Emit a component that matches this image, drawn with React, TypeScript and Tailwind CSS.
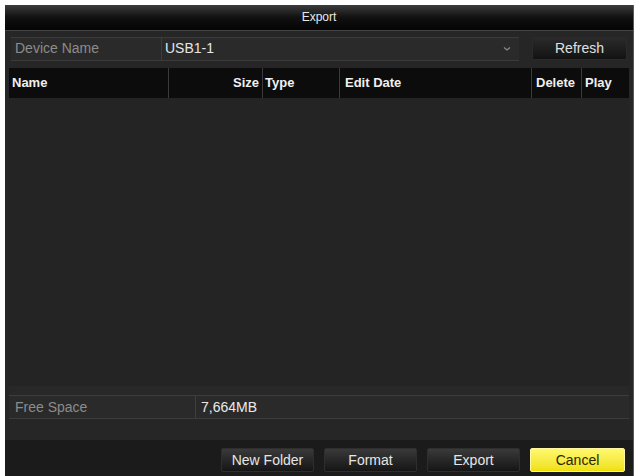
import React from "react";

const font = { fontFamily: '"Liberation Sans", Arial, sans-serif' };

function Btn({ label, yellow }: { label: string; yellow?: boolean }) {
  return (
    <div
      className={
        yellow
          ? "w-[95px] h-[24px] flex items-center justify-center rounded-[2px] bg-gradient-to-b from-[#fff86a] to-[#f0e000] border border-[#fff7a0] text-[#2a2600] text-[14px]"
          : "w-[93px] h-[24px] flex items-center justify-center rounded-[2px] bg-gradient-to-b from-[#3a3a3a] to-[#161616] border border-[#2e2e2e] text-[#e6e6e6] text-[14px]"
      }
    >
      {label}
    </div>
  );
}

export default function App() {
  return (
    <div className="w-[640px] h-[476px] bg-white pl-[5px] pt-[5px] pr-[6px]" style={font}>
      <div className="w-full h-full flex flex-col bg-[#262626] border-r border-[#5a5a5a]">
        {/* title */}
        <div className="h-[26px] flex items-center justify-center bg-gradient-to-b from-[#3c3c3c] via-[#111] to-[#050505] border-b border-[#444] text-[#e8e8e8] text-[12px]">
          Export
        </div>
        {/* device row */}
        <div className="flex items-center mt-[5px] px-[6px] h-[26px] gap-[13px]">
          <div className="flex-1 flex h-[24px] border-y border-[#3a3a3a] bg-[#2a2a2a]">
            <div className="w-[151px] flex items-center pl-[4px] text-[#8c8c8c] text-[14px] border-r border-[#3c3c3c]">
              Device Name
            </div>
            <div className="flex-1 flex items-center pl-[3px] pr-[8px] text-[#e6e6e6] text-[14px]">
              <span className="flex-1">USB1-1</span>
              <svg width="8" height="6" viewBox="0 0 8 6">
                <path d="M1 1.5 L4 4 L7 1.5" stroke="#8a8a8a" strokeWidth="1.2" fill="none" />
              </svg>
            </div>
          </div>
          <div className="w-[95px] h-[23px] flex items-center justify-center bg-gradient-to-b from-[#2a2a2a] to-[#131313] border border-[#2a2a2a] text-[#e0e0e0] text-[14px]">
            Refresh
          </div>
        </div>
        {/* header */}
        <div className="mt-[6px] mx-[4px] h-[30px] flex bg-[#0c0c0c] text-[#f0f0f0] text-[13px] font-bold">
          <div className="w-[160px] flex items-center pl-[3px] border-r border-[#3a3a3a]">Name</div>
          <div className="w-[94px] flex items-center justify-end pr-[3px] border-r border-[#3a3a3a]">Size</div>
          <div className="w-[77px] flex items-center pl-[2px] border-r border-[#3a3a3a]">Type</div>
          <div className="w-[192px] flex items-center pl-[5px] border-r border-[#3a3a3a]">Edit Date</div>
          <div className="w-[50px] flex items-center pl-[4px] border-r border-[#3a3a3a]">Delete</div>
          <div className="flex-1 flex items-center pl-[3px]">Play</div>
        </div>
        {/* body */}
        <div className="mx-[4px] h-[289px] bg-[#242424]" />
        {/* free space */}
        <div className="mx-[4px] flex-1 flex flex-col bg-[#282828] pt-[9px]">
          <div className="h-[24px] flex border-y border-[#3c3c3c] bg-[#2a2a2a] text-[14px]">
            <div className="w-[187px] flex items-center pl-[6px] text-[#8c8c8c] border-r border-[#3e3e3e]">Free Space</div>
            <div className="flex-1 flex items-center pl-[5px] text-[#eaeaea]">7,664MB</div>
          </div>
        </div>
        {/* footer */}
        <div className="h-[36px] mt-[21px] bg-[#1b1b1b] flex items-start justify-end gap-[10px] pr-[8px] pt-[8px]">
          <Btn label="New Folder" />
          <Btn label="Format" />
          <Btn label="Export" />
          <Btn label="Cancel" yellow />
        </div>
      </div>
    </div>
  );
}
